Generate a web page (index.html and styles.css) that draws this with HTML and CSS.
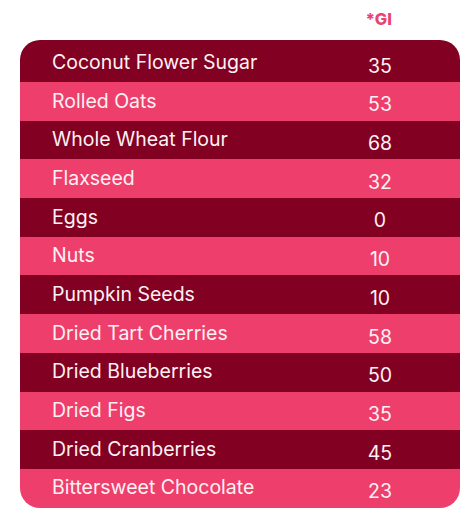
FILE: index.html
```html
<!DOCTYPE html>
<html>
<head>
<meta charset="utf-8">
<link rel="stylesheet" href="styles.css">
</head>
<body>
<div class="wrap">
  <div class="head"><span class="gi">*GI</span></div>
  <div class="table">
    <div class="row dark first"><span class="name">Coconut Flower Sugar</span><span class="val">35</span></div>
    <div class="row pink"><span class="name">Rolled Oats</span><span class="val">53</span></div>
    <div class="row dark"><span class="name">Whole Wheat Flour</span><span class="val">68</span></div>
    <div class="row pink"><span class="name">Flaxseed</span><span class="val">32</span></div>
    <div class="row dark"><span class="name">Eggs</span><span class="val">0</span></div>
    <div class="row pink"><span class="name">Nuts</span><span class="val">10</span></div>
    <div class="row dark"><span class="name">Pumpkin Seeds</span><span class="val">10</span></div>
    <div class="row pink"><span class="name">Dried Tart Cherries</span><span class="val">58</span></div>
    <div class="row dark"><span class="name">Dried Blueberries</span><span class="val">50</span></div>
    <div class="row pink"><span class="name">Dried Figs</span><span class="val">35</span></div>
    <div class="row dark"><span class="name">Dried Cranberries</span><span class="val">45</span></div>
    <div class="row pink"><span class="name">Bittersweet Chocolate</span><span class="val">23</span></div>
  </div>
</div>
</body>
</html>
```
FILE: styles.css
```css
html, body {
  margin: 0;
  padding: 0;
  background: #ffffff;
}
body {
  font-family: Inter, "Noto Sans", sans-serif;
}
.wrap {
  width: 440px;
  margin-left: 20px;
  padding-top: 9px;
}
.head {
  height: 31px;
  display: flex;
  justify-content: flex-end;
  padding-right: 68px;
}
.gi {
  color: #e8446f;
  font-weight: 800;
  font-size: 16.5px;
  line-height: 20px;
}
.table {
  border-radius: 20px;
  overflow: hidden;
}
.row {
  box-sizing: border-box;
  height: 38.7px;
  display: flex;
  align-items: flex-start;
  padding-top: 6.6px;
  color: #fdf1f3;
  font-size: 19.5px;
  line-height: 24px;
}
.row.first {
  height: 42px;
  padding-top: 10px;
}
.dark {
  background: #820022;
}
.pink {
  background: #ee3f6c;
}
.name {
  flex: 1;
  padding-left: 32px;
}
.val {
  width: 40px;
  margin-right: 60px;
  margin-top: 3.8px;
  text-align: center;
}
```
